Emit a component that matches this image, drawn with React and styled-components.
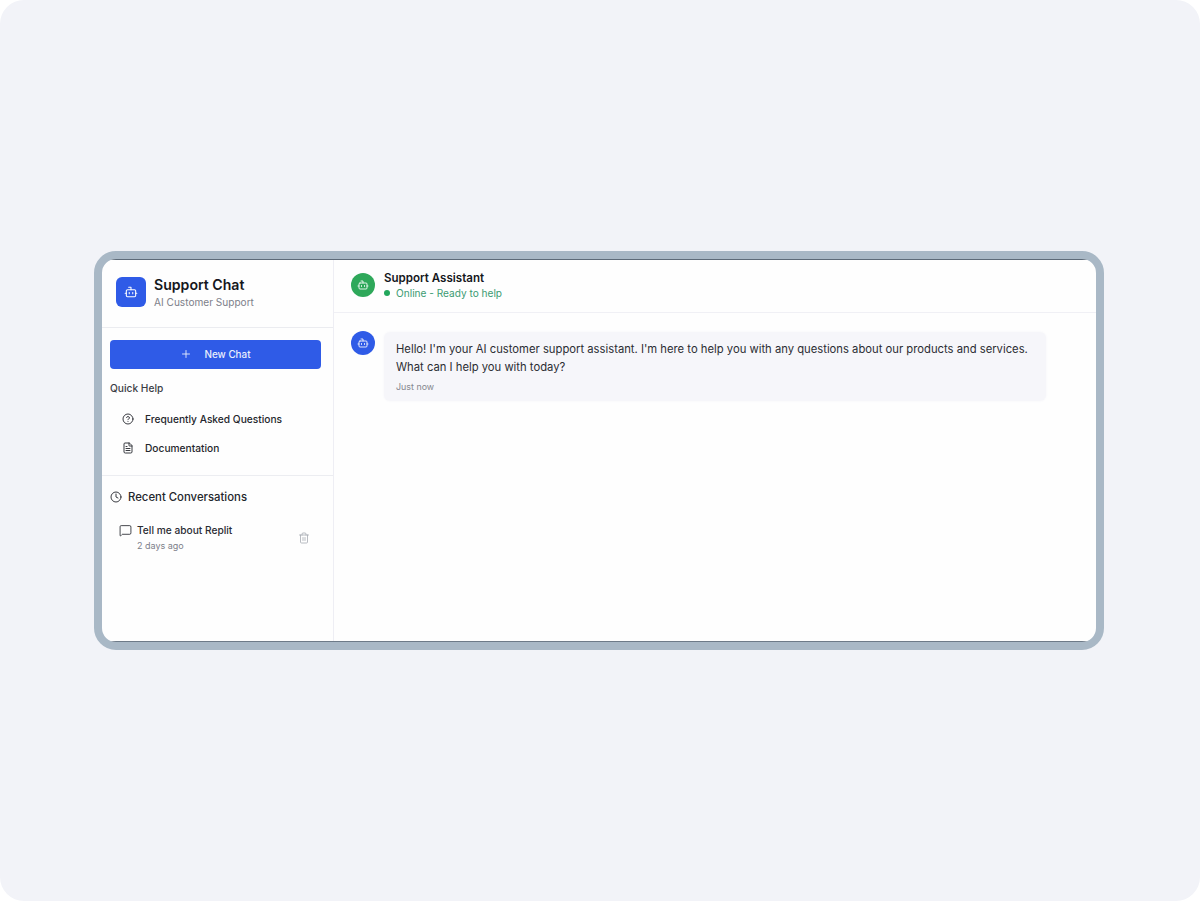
import React from "react";
import styled, { createGlobalStyle } from "styled-components";
import { Bot, Plus, CircleHelp, FileText, Clock, MessageSquare, Trash2 } from "lucide-react";

const Global = createGlobalStyle`
  html, body { margin: 0; padding: 0; background: #fff; }
  body { font-family: Inter, "Liberation Sans", sans-serif; color: #15171c; }
  * { box-sizing: border-box; }
`;

const Page = styled.div`
  width: 1200px;
  height: 901px;
  padding: 251px 96px 0 94px;
  background: #f2f3f8;
  border-radius: 24px;
  overflow: hidden;
`;

const Frame = styled.div`
  width: 1010px;
  height: 399px;
  border: 8px solid #a9b8c6;
  border-radius: 22px;
  background: #fefefe;
  overflow: hidden;
  display: flex;
`;

const Shell = styled.div`
  flex: 1;
  display: flex;
  min-width: 0;
  border-top: 1px solid #5d6a78;
  border-bottom: 1px solid #6d7a88;
`;

const Sidebar = styled.aside`
  width: 232px;
  flex: none;
  border-right: 1px solid #eeeef4;
  display: flex;
  flex-direction: column;
`;

const Brand = styled.div`
  height: 68px;
  padding: 17px 14px 0;
  display: flex;
  gap: 8px;
  border-bottom: 1px solid #ebecf0;
`;

const BrandIcon = styled.div`
  width: 30px;
  height: 30px;
  border-radius: 6px;
  background: #2f5be7;
  color: #fff;
  display: flex;
  align-items: center;
  justify-content: center;
`;

const BrandText = styled.div`
  display: flex;
  flex-direction: column;
  margin-top: -1px;
`;

const BrandTitle = styled.div`
  font-size: 14.1px;
  line-height: 17px;
  font-weight: 600;
  color: #15171c;
`;

const BrandSub = styled.div`
  font-size: 10.1px;
  line-height: 14px;
  margin-top: 2px;
  color: #7d808a;
`;

const Actions = styled.div`
  padding: 12px 12px 0 8px;
  height: 148px;
  border-bottom: 1px solid #ecedf1;
`;

const NewChat = styled.button`
  width: 211px;
  height: 29px;
  border: 0;
  border-radius: 4px;
  background: #2f5be7;
  color: #e9eefc;
  font: 500 9.9px Inter, sans-serif;
  display: flex;
  align-items: center;
  justify-content: center;
  gap: 12px;
  padding: 0 0 1px;
`;

const SectionLabel = styled.div`
  margin-top: 12px;
  font-size: 10.2px;
  line-height: 14px;
  font-weight: 500;
  color: #3a3d45;
`;

const HelpList = styled.div`
  margin-top: 9px;
  display: flex;
  flex-direction: column;
`;

const HelpRow = styled.div`
  height: 29px;
  padding-left: 12px;
  display: flex;
  align-items: center;
  gap: 11px;
  font-size: 10.2px;
  font-weight: 500;
  color: #24262c;
`;

const Recent = styled.div`
  padding: 13px 12px 0 8px;
`;

const RecentHead = styled.div`
  display: flex;
  align-items: center;
  gap: 6px;
  font-size: 11.35px;
  line-height: 16px;
  font-weight: 500;
  color: #24262c;
`;

const Conversation = styled.div`
  margin-top: 18px;
  padding: 0 11px 0 9px;
  display: flex;
  align-items: center;
  justify-content: space-between;
`;

const ConvMain = styled.div`
  display: flex;
  flex-direction: column;
`;

const ConvTitle = styled.div`
  display: flex;
  align-items: center;
  gap: 5px;
  font-size: 10.2px;
  line-height: 14px;
  font-weight: 500;
  color: #2a2c33;
`;

const ConvTime = styled.div`
  margin-left: 18px;
  margin-top: 3px;
  font-size: 9px;
  line-height: 12px;
  color: #7d808a;
`;

const TrashBtn = styled.div`
  color: #a2a5ad;
  display: flex;
`;

const Main = styled.main`
  flex: 1;
  min-width: 0;
  display: flex;
  flex-direction: column;
`;

const ChatHead = styled.header`
  height: 53px;
  padding: 13px 0 0 17px;
  display: flex;
  gap: 9px;
  border-bottom: 1px solid #f0f0f5;
`;

const Avatar = styled.div`
  width: 24px;
  height: 24px;
  flex: none;
  border-radius: 50%;
  background: ${(p) => p.$bg};
  color: #fff;
  display: flex;
  align-items: center;
  justify-content: center;
`;

const ChatInfo = styled.div`
  margin-top: -3px;
  display: flex;
  flex-direction: column;
`;

const ChatName = styled.div`
  font-size: 11.55px;
  line-height: 16px;
  font-weight: 600;
  color: #15171c;
`;

const Status = styled.div`
  display: flex;
  align-items: center;
  gap: 6px;
  font-size: 10.1px;
  line-height: 14px;
  color: #3c9b72;
`;

const Dot = styled.span`
  width: 6px;
  height: 6px;
  border-radius: 50%;
  background: #22a75c;
`;

const Messages = styled.div`
  padding: 18px 0 0 17px;
  display: flex;
  gap: 9px;
  align-items: flex-start;
`;

const Bubble = styled.div`
  width: 662px;
  height: 69px;
  margin-top: 1px;
  padding: 8px 12px 0;
  border-radius: 6px;
  background: #f6f6fa;
  box-shadow: 0 0 3px #f6f6fa;
`;

const BubbleText = styled.div`
  font-size: 11.25px;
  line-height: 18px;
  color: #2b2d33;
  white-space: nowrap;
`;

const BubbleTime = styled.div`
  margin-top: 5px;
  font-size: 8.9px;
  line-height: 12px;
  color: #85878f;
`;

export default function App() {
  return (
    <>
      <Global />
      <Page>
        <Frame>
          <Shell>
            <Sidebar>
              <Brand>
                <BrandIcon><Bot size={14} strokeWidth={1.8} /></BrandIcon>
                <BrandText>
                  <BrandTitle>Support Chat</BrandTitle>
                  <BrandSub>AI Customer Support</BrandSub>
                </BrandText>
              </Brand>
              <Actions>
                <NewChat><Plus size={12} strokeWidth={1.8} />New Chat</NewChat>
                <SectionLabel>Quick Help</SectionLabel>
                <HelpList>
                  <HelpRow><CircleHelp size={12} strokeWidth={1.8} />Frequently Asked Questions</HelpRow>
                  <HelpRow><FileText size={12} strokeWidth={1.8} />Documentation</HelpRow>
                </HelpList>
              </Actions>
              <Recent>
                <RecentHead><Clock size={12} strokeWidth={1.8} />Recent Conversations</RecentHead>
                <Conversation>
                  <ConvMain>
                    <ConvTitle><MessageSquare size={13} strokeWidth={1.6} />Tell me about Replit</ConvTitle>
                    <ConvTime>2 days ago</ConvTime>
                  </ConvMain>
                  <TrashBtn><Trash2 size={12} strokeWidth={1.5} /></TrashBtn>
                </Conversation>
              </Recent>
            </Sidebar>
            <Main>
              <ChatHead>
                <Avatar $bg="#2ea85a"><Bot size={12} strokeWidth={1.7} /></Avatar>
                <ChatInfo>
                  <ChatName>Support Assistant</ChatName>
                  <Status><Dot />Online - Ready to help</Status>
                </ChatInfo>
              </ChatHead>
              <Messages>
                <Avatar $bg="#2f5be7"><Bot size={12} strokeWidth={1.7} /></Avatar>
                <Bubble>
                  <BubbleText>
                    Hello! I'm your AI customer support assistant. I'm here to help you with any questions about our products and services.
                    <br />
                    What can I help you with today?
                  </BubbleText>
                  <BubbleTime>Just now</BubbleTime>
                </Bubble>
              </Messages>
            </Main>
          </Shell>
        </Frame>
      </Page>
    </>
  );
}
